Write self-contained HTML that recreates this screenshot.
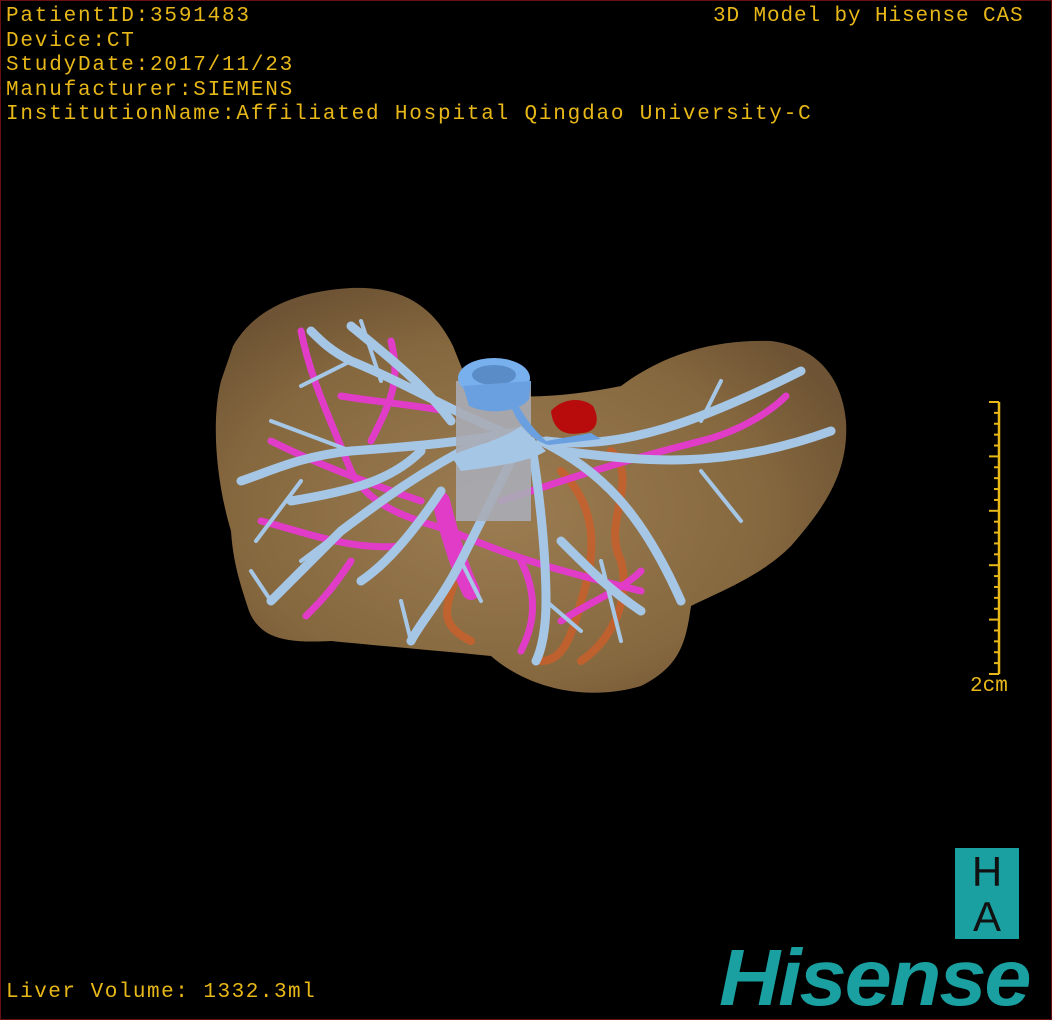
<!DOCTYPE html>
<html><head><meta charset="utf-8"><style>
html,body{margin:0;padding:0;background:#000;}
#w{position:relative;width:1052px;height:1020px;background:#000;overflow:hidden;box-sizing:border-box;border:1px solid #6a1010;}
.t{position:absolute;color:#e8b818;font-family:"Liberation Mono","DejaVu Sans Mono",monospace;font-size:21px;line-height:24.5px;white-space:pre;letter-spacing:1.8px}
</style></head><body><div id="w">
<svg width="1052" height="1020" style="position:absolute;left:0;top:0">
<defs>
<radialGradient id="lg" cx="0.45" cy="0.55" r="0.6">
<stop offset="0" stop-color="#9c7d52"/><stop offset="0.7" stop-color="#86683f"/><stop offset="1" stop-color="#6e5434"/>
</radialGradient>
</defs>
<path d="M232,345 C255,305 300,290 350,287 C395,285 430,300 452,345 L470,390 C520,400 570,395 620,385 C660,355 710,338 770,340 C810,345 840,370 845,420 C848,470 825,505 790,545 C760,575 720,590 690,605 C685,640 680,665 640,685 C590,700 530,690 490,655 C440,650 380,645 330,640 C290,642 260,640 248,610 C238,580 232,560 230,530 C215,480 210,420 220,380 Z" fill="url(#lg)"/>
<g fill="none" stroke-linecap="round">
<g stroke="#c8602c" stroke-width="8" opacity="0.85">
<path d="M560,470 C590,500 600,540 580,600 C570,640 560,660 540,660"/>
<path d="M610,450 C640,480 600,520 620,560 C630,600 610,640 580,660"/>
<path d="M460,560 C450,600 430,620 470,640"/>
</g>
<g stroke="#e03cc8" stroke-width="7">
<path d="M300,330 C310,380 330,420 350,470 C370,510 420,520 450,530 C520,560 560,570 640,590"/>
<path d="M270,440 C310,460 360,480 420,500"/>
<path d="M260,520 C300,530 350,550 400,545"/>
<path d="M370,440 C390,400 400,380 390,340"/>
<path d="M350,560 C330,590 320,600 305,615"/>
<path d="M500,500 C560,480 620,460 700,440 C740,430 770,410 785,395"/>
<path d="M520,560 C540,600 530,630 520,650"/>
<path d="M560,620 C590,600 620,590 640,570"/>
<path d="M440,500 C450,540 460,570 470,590" stroke-width="18"/>
<path d="M340,395 C370,400 420,405 445,410"/>
</g>
<g stroke="#a6c6e6" stroke-width="9">
<path d="M520,430 C470,440 420,445 350,450 C300,455 270,470 240,480"/>
<path d="M500,430 C450,410 400,380 350,360 C330,350 320,340 310,330"/>
<path d="M480,440 C420,470 380,500 340,530 C310,560 290,580 270,600"/>
<path d="M520,440 C500,480 480,520 460,560 C440,600 420,620 410,640"/>
<path d="M530,440 C540,500 545,560 545,600 C545,630 540,650 535,660"/>
<path d="M540,440 C600,470 640,510 680,600"/>
<path d="M545,440 C620,450 700,420 800,370"/>
<path d="M560,450 C640,460 720,470 830,430"/>
<path d="M450,420 C420,380 380,350 350,325"/>
<path d="M420,450 C390,480 350,490 290,500"/>
<path d="M560,540 C590,570 610,590 640,610"/>
<path d="M440,490 C420,520 390,560 360,580"/>
</g>
<g stroke="#a6c6e6" stroke-width="4">
<path d="M350,360 L300,385"/><path d="M380,380 L360,320"/><path d="M350,450 L270,420"/>
<path d="M340,530 L300,560"/><path d="M300,480 L255,540"/><path d="M460,560 L480,600"/>
<path d="M700,420 L720,380"/><path d="M700,470 L740,520"/><path d="M600,560 L620,640"/>
<path d="M410,640 L400,600"/><path d="M270,600 L250,570"/><path d="M545,600 L580,630"/>
</g>
</g>
<rect x="455" y="380" width="75" height="140" fill="#a8acb6" opacity="0.9"/>
<path d="M520,425 C500,440 470,445 450,455 L460,470 C500,465 530,460 545,450 Z" fill="#a6c6e6"/>
<ellipse cx="493" cy="377" rx="36" ry="20" fill="#78b0ee"/>
<ellipse cx="493" cy="374" rx="22" ry="10" fill="#5a8cc8"/>
<path d="M462,385 L468,405 C490,415 520,410 528,398 L530,380 Z" fill="#6aa0e0"/>
<path d="M515,400 C525,420 535,430 545,440 L590,432 L600,438 L548,444 C530,440 515,420 510,405 Z" fill="#6aa0e0"/>
<path d="M550,410 C560,398 580,395 592,405 C600,420 595,432 580,432 C565,435 552,430 550,410 Z" fill="#b80c0c"/>
<line x1="998" y1="401" x2="998" y2="673" stroke="#e8b818" stroke-width="2.5"/>
<g id="ticks"></g>
</svg>
<div class="t" style="left:5px;top:4px">PatientID:3591483
Device:CT
StudyDate:2017/11/23
Manufacturer:SIEMENS
InstitutionName:Affiliated Hospital Qingdao University-C</div>
<div class="t" style="left:712px;top:4px;letter-spacing:0.9px">3D Model by Hisense CAS</div>
<div class="t" style="left:969px;top:674px;letter-spacing:0">2cm</div>
<div class="t" style="left:5px;top:980px;letter-spacing:1.5px">Liver Volume: 1332.3ml</div>
<div style="position:absolute;left:954px;top:847px;width:64px;height:91px;background:#1aa0a0;"></div>
<div style="position:absolute;left:954px;top:847px;width:64px;height:45px;line-height:45px;text-align:center;font:42px 'Liberation Sans',sans-serif;color:#111">H</div>
<div style="position:absolute;left:954px;top:892px;width:64px;height:46px;line-height:46px;text-align:center;font:42px 'Liberation Sans',sans-serif;color:#111">A</div>
<div style="position:absolute;left:718px;top:932px;font:italic bold 80px 'Liberation Sans',sans-serif;color:#1aa0a0;letter-spacing:-2px;line-height:90px;transform:scaleX(1.06);transform-origin:0 0">Hisense</div>
</div>
<script>
var g=document.getElementById('ticks'),s='';
for(var i=0;i<=25;i++){var y=401+i*272/25;var l=(i%5==0)?10:5;
s+='<line x1="'+(998-l)+'" y1="'+y+'" x2="998" y2="'+y+'" stroke="#e8b818" stroke-width="2"/>';}
g.innerHTML=s;
</script>
</body></html>
